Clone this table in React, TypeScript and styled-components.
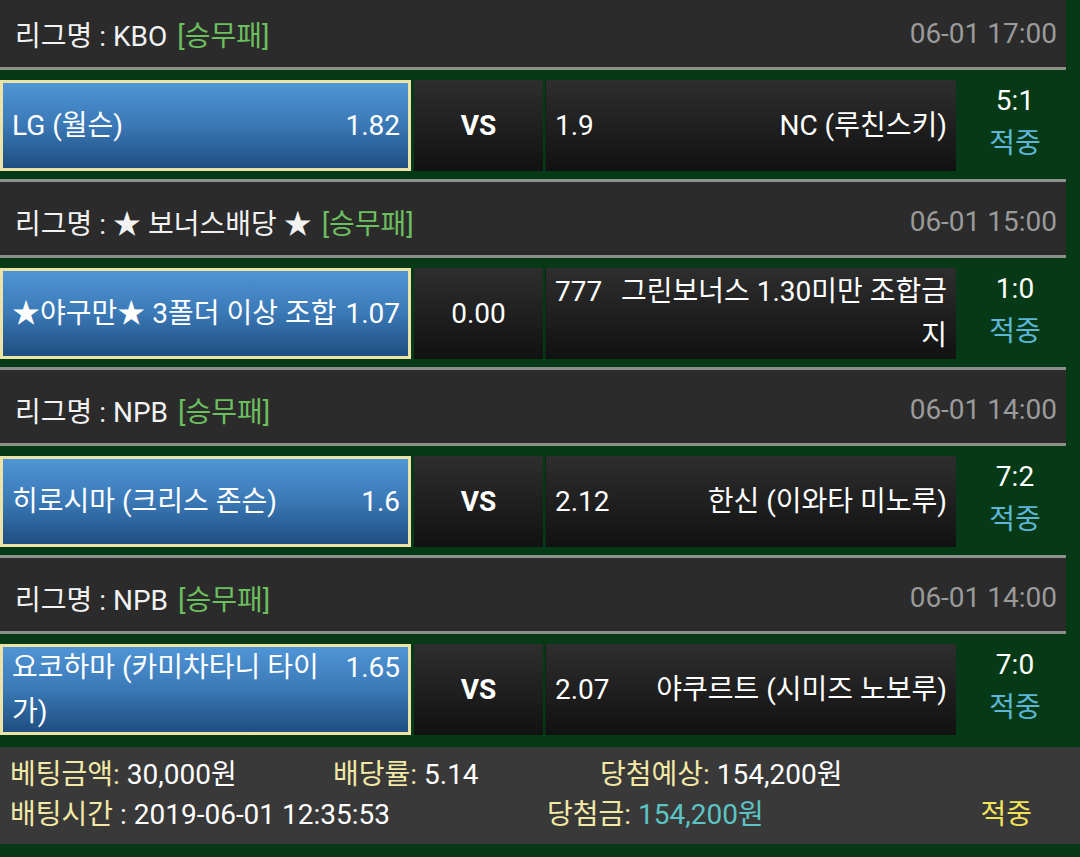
import React from 'react';
import styled, { createGlobalStyle } from 'styled-components';

const Global = createGlobalStyle`
  html, body {
    margin: 0;
    padding: 0;
    background: #063a16;
  }
  body {
    font-family: Roboto, "Noto Sans CJK KR", sans-serif;
    font-size: 28px;
    color: #fff;
    overflow: hidden;
  }
`;

const Page = styled.div`
  width: 1080px;
  min-height: 857px;
  background: #063a16;
  overflow: hidden;
`;

const List = styled.div`
  width: 1066px;
  margin-top: -9px;
`;

const Block = styled.div`
  padding-bottom: 8px;
`;

const Header = styled.div`
  border-top: 3px solid #8b908b;
  border-bottom: 3px solid #8b908b;
  background: #2b2b2b;
  display: flex;
  align-items: center;
  justify-content: space-between;
  padding: 6px 9px 0 15px;
  height: 67px;
`;

const League = styled.div`
  color: #f2f2f2;
  white-space: nowrap;
`;

const Kind = styled.span`
  color: #6cbf5e;
  margin-left: 10px;
`;

const Date = styled.div`
  color: #9a9a9a;
`;

const Match = styled.div`
  margin-top: 10px;
  height: 91px;
  display: flex;
`;

const Home = styled.div`
  width: 411px;
  box-sizing: border-box;
  border: 3px solid #ece3a6;
  background: linear-gradient(#4f95d6, #3a78b6 50%, #1f4e80);
  padding: 0 8px 0 9px;
  display: flex;
  align-items: center;
  line-height: 44px;
`;

const Mid = styled.div<{ $bold?: boolean }>`
  width: 129px;
  margin-left: 3px;
  background: linear-gradient(#2e2e2e, #111);
  display: flex;
  align-items: center;
  justify-content: center;
  font-weight: ${(p) => (p.$bold ? 700 : 400)};
`;

const Away = styled.div`
  width: 411px;
  margin-left: 2px;
  border-left: 1px solid #0d2613;
  box-sizing: border-box;
  background: linear-gradient(#2e2e2e, #111);
  padding: 0 9px;
  display: flex;
  align-items: center;
  line-height: 44px;
`;

const Flow = styled.div`
  flex: 1;
`;

const OddsRight = styled.span`
  float: right;
  margin-left: 4px;
`;

const OddsLeft = styled.span`
  float: left;
  margin-right: 15px;
`;

const TeamLeft = styled.div`
  text-align: left;
`;

const TeamRight = styled.div`
  text-align: right;
`;

const Score = styled.div`
  flex: 1;
  display: flex;
  flex-direction: column;
  align-items: center;
  justify-content: center;
  padding: 0 0 8px 8px;
  line-height: 43px;
`;

const Hit = styled.div`
  color: #5db6d8;
`;

const Footer = styled.div`
  margin-top: 4px;
  background: #393939;
  padding: 8px 48px 9px 10px;
  line-height: 40px;
`;

const FootRow = styled.div`
  display: flex;
  white-space: nowrap;
`;

const FootItem = styled.div<{ $w?: number }>`
  width: ${(p) => (p.$w ? `${p.$w}px` : 'auto')};
  flex: ${(p) => (p.$w ? 'none' : '1')};
`;

const Label = styled.span`
  color: #f3e9a6;
`;

const Teal = styled.span`
  color: #5cc4c4;
`;

const Result = styled.div`
  color: #f2e35a;
`;

type Game = {
  league: string;
  date: string;
  home: string;
  homeOdds: string;
  mid: string;
  awayOdds: string;
  away: string;
  score: string;
};

const games: Game[] = [
  { league: 'KBO', date: '06-01 17:00', home: 'LG (월슨)', homeOdds: '1.82', mid: 'VS', awayOdds: '1.9', away: 'NC (루친스키)', score: '5:1' },
  { league: '★ 보너스배당 ★', date: '06-01 15:00', home: '★야구만★ 3폴더 이상 조합', homeOdds: '1.07', mid: '0.00', awayOdds: '777', away: '그린보너스 1.30미만 조합금지', score: '1:0' },
  { league: 'NPB', date: '06-01 14:00', home: '히로시마 (크리스 존슨)', homeOdds: '1.6', mid: 'VS', awayOdds: '2.12', away: '한신 (이와타 미노루)', score: '7:2' },
  { league: 'NPB', date: '06-01 14:00', home: '요코하마 (카미차타니 타이가)', homeOdds: '1.65', mid: 'VS', awayOdds: '2.07', away: '야쿠르트 (시미즈 노보루)', score: '7:0' },
];

export default function App() {
  return (
    <Page>
      <Global />
      <List>
        {games.map((g, i) => (
          <Block key={i}>
            <Header>
              <League>
                리그명 : {g.league}
                <Kind>[승무패]</Kind>
              </League>
              <Date>{g.date}</Date>
            </Header>
            <Match>
              <Home>
                <Flow>
                  <OddsRight>{g.homeOdds}</OddsRight>
                  <TeamLeft>{g.home}</TeamLeft>
                </Flow>
              </Home>
              <Mid $bold={g.mid === 'VS'}>{g.mid}</Mid>
              <Away>
                <Flow>
                  <OddsLeft>{g.awayOdds}</OddsLeft>
                  <TeamRight>{g.away}</TeamRight>
                </Flow>
              </Away>
              <Score>
                <div>{g.score}</div>
                <Hit>적중</Hit>
              </Score>
            </Match>
          </Block>
        ))}
      </List>
      <Footer>
        <FootRow>
          <FootItem $w={323}>
            <Label>베팅금액:</Label> 30,000원
          </FootItem>
          <FootItem $w={267}>
            <Label>배당률:</Label> 5.14
          </FootItem>
          <FootItem>
            <Label>당첨예상:</Label> 154,200원
          </FootItem>
        </FootRow>
        <FootRow>
          <FootItem $w={537}>
            <Label>배팅시간</Label> : 2019-06-01 12:35:53
          </FootItem>
          <FootItem>
            <Label>당첨금:</Label> <Teal>154,200원</Teal>
          </FootItem>
          <Result>적중</Result>
        </FootRow>
      </Footer>
    </Page>
  );
}
